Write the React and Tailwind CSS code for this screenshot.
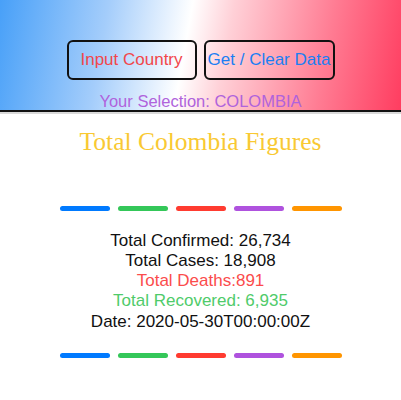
import React from "react";

const dashes = ["bg-[#007aff]", "bg-[#34c759]", "bg-[#ff3b30]", "bg-[#af52de]", "bg-[#ff9500]"];

function Dashes() {
  return (
    <div className="flex justify-center gap-2">
      {dashes.map((c) => (
        <div key={c} className={`h-[5px] w-[50px] rounded-full ${c}`} />
      ))}
    </div>
  );
}

export default function App() {
  const sans = { fontFamily: '"Liberation Sans", Arial, sans-serif' };

  return (
    <div className="w-[401px] h-[400px] bg-white overflow-hidden" style={sans}>
      <div className="h-[110px] bg-[linear-gradient(100deg,#48a0f8_0%,#a4cdfb_26%,#ffffff_46%,#ffd0d7_56%,#ff7c93_80%,#ff3d60_100%)] flex flex-col items-center pt-[40px]">
        <div className="flex gap-[7px]">
          <button className="w-[130px] h-[40px] border-2 border-[#111] rounded-[6px] text-[17px] text-[#f2474b]">
            Input Country
          </button>
          <button className="w-[131px] h-[40px] border-2 border-[#111] rounded-[6px] text-[17px] text-[#1b7ff3]">
            Get / Clear Data
          </button>
        </div>
        <div className="mt-[12px] text-[16.5px] leading-[19px] text-[#b063dc]">Your Selection: COLOMBIA</div>
      </div>
      <div className="h-[2px] bg-[#111]" />
      <div className="h-[2px] bg-[#d9d9d9]" />

      <div
        className="mt-[13px] text-center text-[25.5px] leading-[30px] text-[#f9c933]"
        style={{ fontFamily: '"Liberation Serif", "Times New Roman", serif' }}
      >
        Total Colombia Figures
      </div>

      <div className="mt-[49px]">
        <Dashes />
      </div>

      <div className="mt-[20px] text-center text-[17px] leading-[20px] text-[#111]">
        <div>Total Confirmed: 26,734</div>
        <div>Total Cases: 18,908</div>
        <div className="text-[#fb4c4c]">Total Deaths:891</div>
        <div className="text-[#4fcb6a]">Total Recovered: 6,935</div>
        <div className="mt-[1px]">Date: 2020-05-30T00:00:00Z</div>
      </div>

      <div className="mt-[21px]">
        <Dashes />
      </div>
    </div>
  );
}
